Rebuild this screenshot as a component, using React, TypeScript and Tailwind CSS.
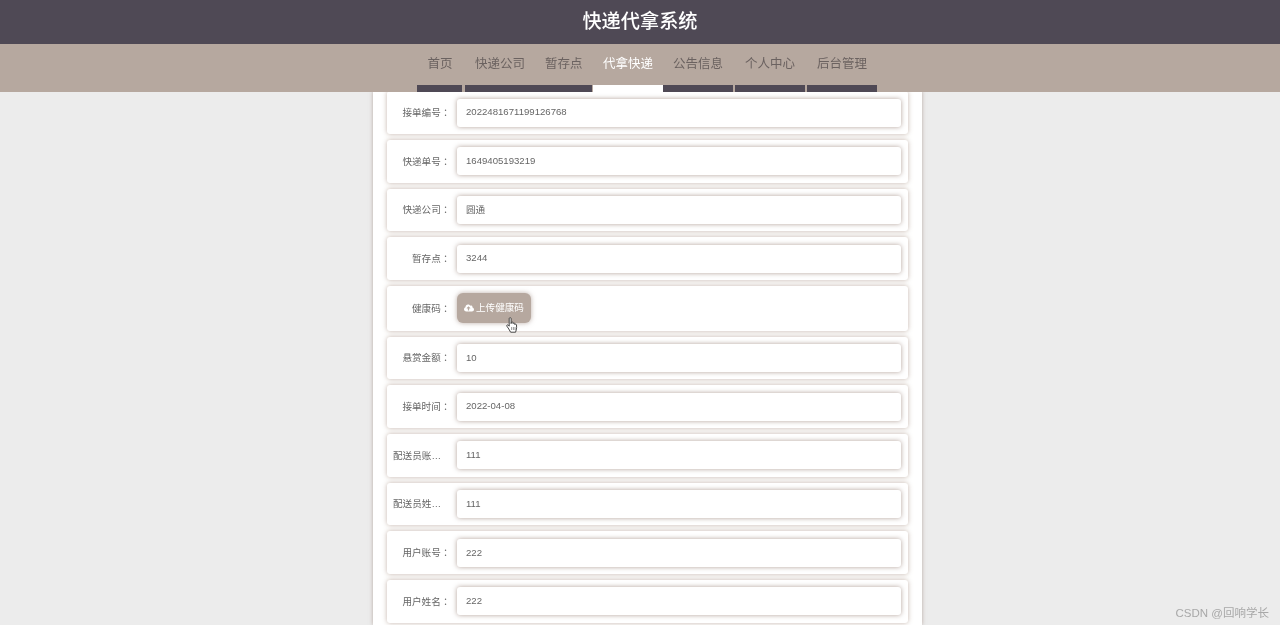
import { FaCloudUploadAlt } from "react-icons/fa";

const font = { fontFamily: '"Liberation Sans", "Noto Sans CJK SC", sans-serif' };

const rows = [
  ["接单编号", "2022481671199126768"],
  ["快递单号", "1649405193219"],
  ["快递公司", "圆通"],
  ["暂存点", "3244"],
  ["健康码", null],
  ["悬赏金额", "10"],
  ["接单时间", "2022-04-08"],
  ["配送员账号", "111"],
  ["配送员姓名", "111"],
  ["用户账号", "222"],
  ["用户姓名", "222"],
] as const;

function Hand() {
  return (
    <svg width="13" height="17" viewBox="0 0 13 17" className="absolute left-[49px] top-[24px]">
      <path
        d="M3.2 1.6c0-1.2 1.9-1.2 1.9 0v5l.2-1c.3-1 1.7-.8 1.7.2l.1.8c.2-.9 1.6-.8 1.7.2v.8c.3-.8 1.6-.6 1.7.4.2 1.6.2 3.5-.3 5l-.6 2.2H4.6L2.8 12 .9 9.2c-.6-1 .7-1.9 1.5-1l.8 1z"
        fill="#fff"
        stroke="#333"
        strokeWidth="0.9"
        strokeLinejoin="round"
      />
      <path d="M5.6 10v3M7.4 10v3M9 10v3" stroke="#555" strokeWidth="0.6" fill="none" />
    </svg>
  );
}

export default function App() {
  return (
    <div className="relative flex h-screen flex-col overflow-hidden bg-[#ececec] blur-[0.4px]" style={font}>
      <header className="flex h-[44px] shrink-0 items-center justify-center bg-[#4f4955] text-[19.2px] font-medium text-white">
        快递代拿系统
      </header>
      <nav className="z-10 flex h-[48px] shrink-0 bg-[#b6a89f] pl-[417px] text-[12.5px] text-[#6b6260]">
        <div className="flex w-[460px] gap-[2px]">
          <a className="flex h-full w-[45px] items-center justify-center border-b-[7px] border-[#4f4955] pl-[1px]">首页</a>
          <a className="ml-[1px] flex h-full w-[127px] items-center gap-[20px] border-b-[7px] border-[#4f4955] pl-[10px]">
            <span>快递公司</span>
            <span>暂存点</span>
          </a>
          <a className="-ml-[1px] flex h-full w-[70px] items-center justify-center border-b-[7px] border-white text-white">代拿快递</a>
          <a className="-ml-[2px] flex h-full w-[70px] items-center justify-center border-b-[7px] border-[#4f4955]">公告信息</a>
          <a className="flex h-full w-[70px] items-center justify-center border-b-[7px] border-[#4f4955]">个人中心</a>
          <a className="flex h-full w-[70px] items-center justify-center border-b-[7px] border-[#4f4955]">后台管理</a>
        </div>
      </nav>
      <main className="-mt-[0.8px] ml-[373px] flex w-[549px] flex-1 flex-col gap-[6px] bg-white px-[14px] shadow-[0_0_4px_rgba(160,140,130,0.7)]">
        {rows.map(([label, value]) => (
          <div
            key={label}
            className={`flex shrink-0 items-center rounded-[3px] bg-white pl-[6px] pr-[7px] shadow-[0_0_5px_rgba(181,160,150,0.8)] ${
              value === null ? "h-[44.7px]" : "h-[42.7px]"
            }`}
          >
            <label className="block w-[57.4px] shrink-0 truncate text-right text-[9.6px] text-[#666]">
              {label}
              <span className="font-['Noto_Sans_CJK_TC']">：</span>
            </label>
            {value === null ? (
              <div className="relative ml-[6.6px]">
                <button className="flex h-[30px] w-[74px] items-center justify-center gap-[2px] rounded-[6px] bg-[#b6a89f] text-[9.6px] text-white shadow-[0_0_5px_rgba(160,140,130,0.7)]">
                  <FaCloudUploadAlt className="text-[10px]" />
                  上传健康码
                </button>
                <Hand />
              </div>
            ) : (
              <div className="ml-[6.6px] flex h-[28px] flex-1 items-center rounded-[3px] bg-white pl-[9px] text-[9.6px] text-[#666] shadow-[0_0_5px_rgba(165,145,135,0.85)]">
                {value}
              </div>
            )}
          </div>
        ))}
      </main>
      <div className="absolute bottom-[3px] right-[11px] text-[11.5px] text-[#a8a8a8]">CSDN @回响学长</div>
    </div>
  );
}
